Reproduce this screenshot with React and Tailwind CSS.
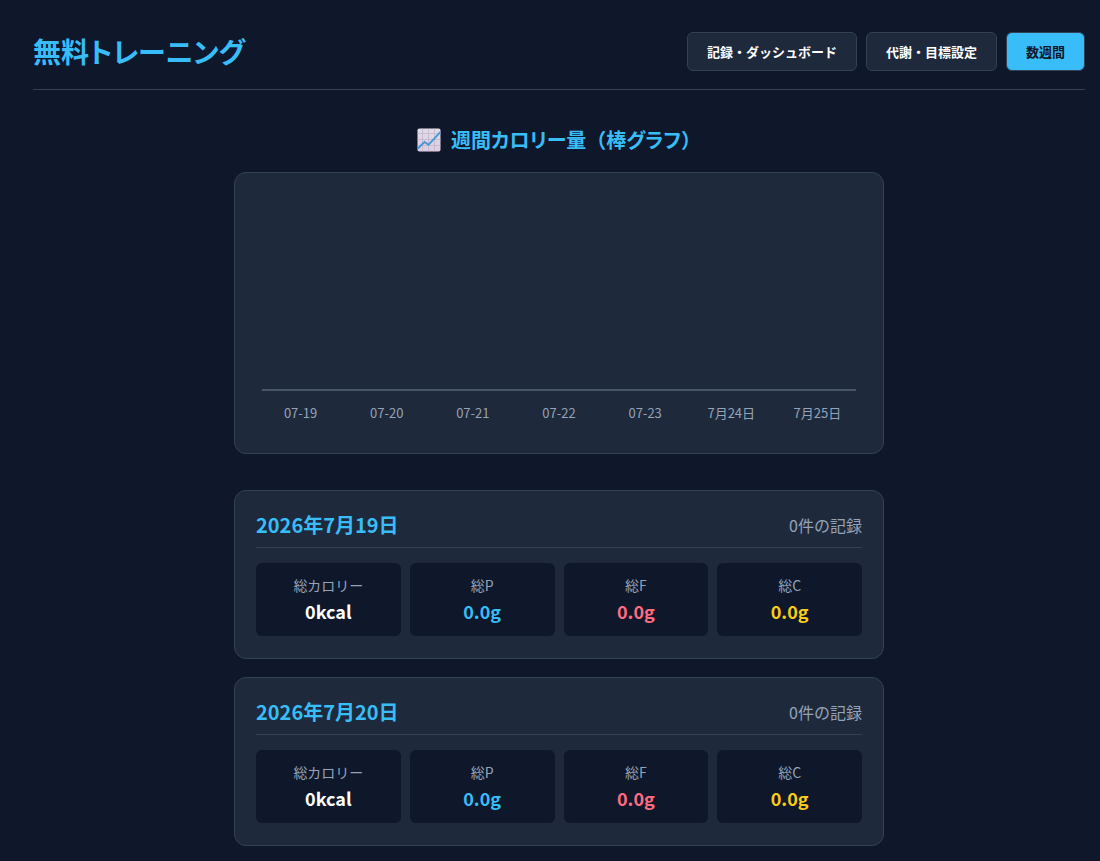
const tabs = [
  { label: "記録・ダッシュボード", active: false },
  { label: "代謝・目標設定", active: false },
  { label: "数週間", active: true },
];

const chartLabels = ["07-19", "07-20", "07-21", "07-22", "07-23", "7月24日", "7月25日"];

const days = ["2026年7月19日", "2026年7月20日"];

const stats = [
  { label: "総カロリー", value: "0kcal", color: "text-white" },
  { label: "総P", value: "0.0g", color: "text-[#38bdf8]" },
  { label: "総F", value: "0.0g", color: "text-[#ff6b81]" },
  { label: "総C", value: "0.0g", color: "text-[#facc15]" },
];

function ChartIcon() {
  return (
    <svg className="size-6 shrink-0" viewBox="0 0 24 24" aria-hidden="true">
      <defs>
        <linearGradient id="paper" x1="0" y1="0" x2="0" y2="1">
          <stop offset="0" stopColor="#e0dcea" />
          <stop offset="1" stopColor="#dccbe2" />
        </linearGradient>
      </defs>
      <rect x="0.5" y="0.5" width="23" height="23" rx="1.8" fill="url(#paper)" />
      <path
        d="M5.5 0.5v23M11.5 0.5v23M17.5 0.5v23M0.5 5.5h23M0.5 11.5h23M0.5 17.5h23"
        stroke="#bfb3c6"
        strokeWidth="0.7"
      />
      <path d="M0.8 20.5 L7.5 14 L11.5 16.8 L23.3 4.2" fill="none" stroke="#4796d6" strokeWidth="1.9" />
    </svg>
  );
}

function DayCard({ date }) {
  return (
    <section className="rounded-xl border border-[#334155] bg-[#1e293b] px-[21px] pt-5 pb-[22px]">
      <div className="mb-[15px] flex items-center justify-between border-b border-[#334155] pb-2">
        <h3 className="text-xl leading-7 font-bold text-[#38bdf8]">{date}</h3>
        <span className="text-base leading-7 text-[#94a3b8]">0件の記録</span>
      </div>
      <dl className="grid grid-cols-4 gap-[9px]">
        {stats.map((s) => (
          <div key={s.label} className="rounded-md bg-[#0f172a] pt-[10px] pb-[11px] text-center">
            <dt className="text-sm leading-6 text-[#94a3b8]">{s.label}</dt>
            <dd className={`text-lg leading-7 font-bold ${s.color}`}>{s.value}</dd>
          </div>
        ))}
      </dl>
    </section>
  );
}

export default function App() {
  return (
    <div className="min-h-screen bg-[#0f172a] pt-8 pr-[15px] pb-4 pl-[33px] font-['Noto_Sans_CJK_JP',sans-serif] text-white">
      <header className="flex items-start justify-between border-b border-[#334155] pb-[18px]">
        <h1 className="text-[28px] leading-[38px] font-bold text-[#38bdf8] [font-feature-settings:'palt']">
          無料トレーニング
        </h1>
        <nav className="flex gap-[9px]">
          {tabs.map((t) => (
            <button
              key={t.label}
              type="button"
              className={`rounded-md border border-[#334155] px-[19px] py-2 text-[13px] leading-[21px] font-bold ${
                t.active ? "bg-[#38bdf8] text-[#0f172a]" : "bg-[#1e293b] text-white"
              }`}
            >
              {t.label}
            </button>
          ))}
        </nav>
      </header>

      <main className="mx-auto max-w-[650px] pt-[34px]">
        <h2 className="mb-4 flex items-center justify-center gap-[10px] text-xl leading-8 font-bold text-[#38bdf8]">
          <ChartIcon />
          <span>
            <span className="[font-feature-settings:'palt']">週間カロリー量</span>（
            <span className="[font-feature-settings:'palt']">棒グラフ</span>）
          </span>
        </h2>
        <section className="rounded-xl border border-[#334155] bg-[#1e293b] px-[27px] pt-[26px] pb-[30px]">
          <div className="h-[192px] border-b-2 border-[#475569]" />
          <ul className="grid grid-cols-7 gap-[9px] pt-3 text-center text-[13px] leading-5 text-[#94a3b8]">
            {chartLabels.map((l) => (
              <li key={l}>{l}</li>
            ))}
          </ul>
        </section>
        <div className="mt-9 flex flex-col gap-[18px]">
          {days.map((d) => (
            <DayCard key={d} date={d} />
          ))}
        </div>
      </main>
    </div>
  );
}
